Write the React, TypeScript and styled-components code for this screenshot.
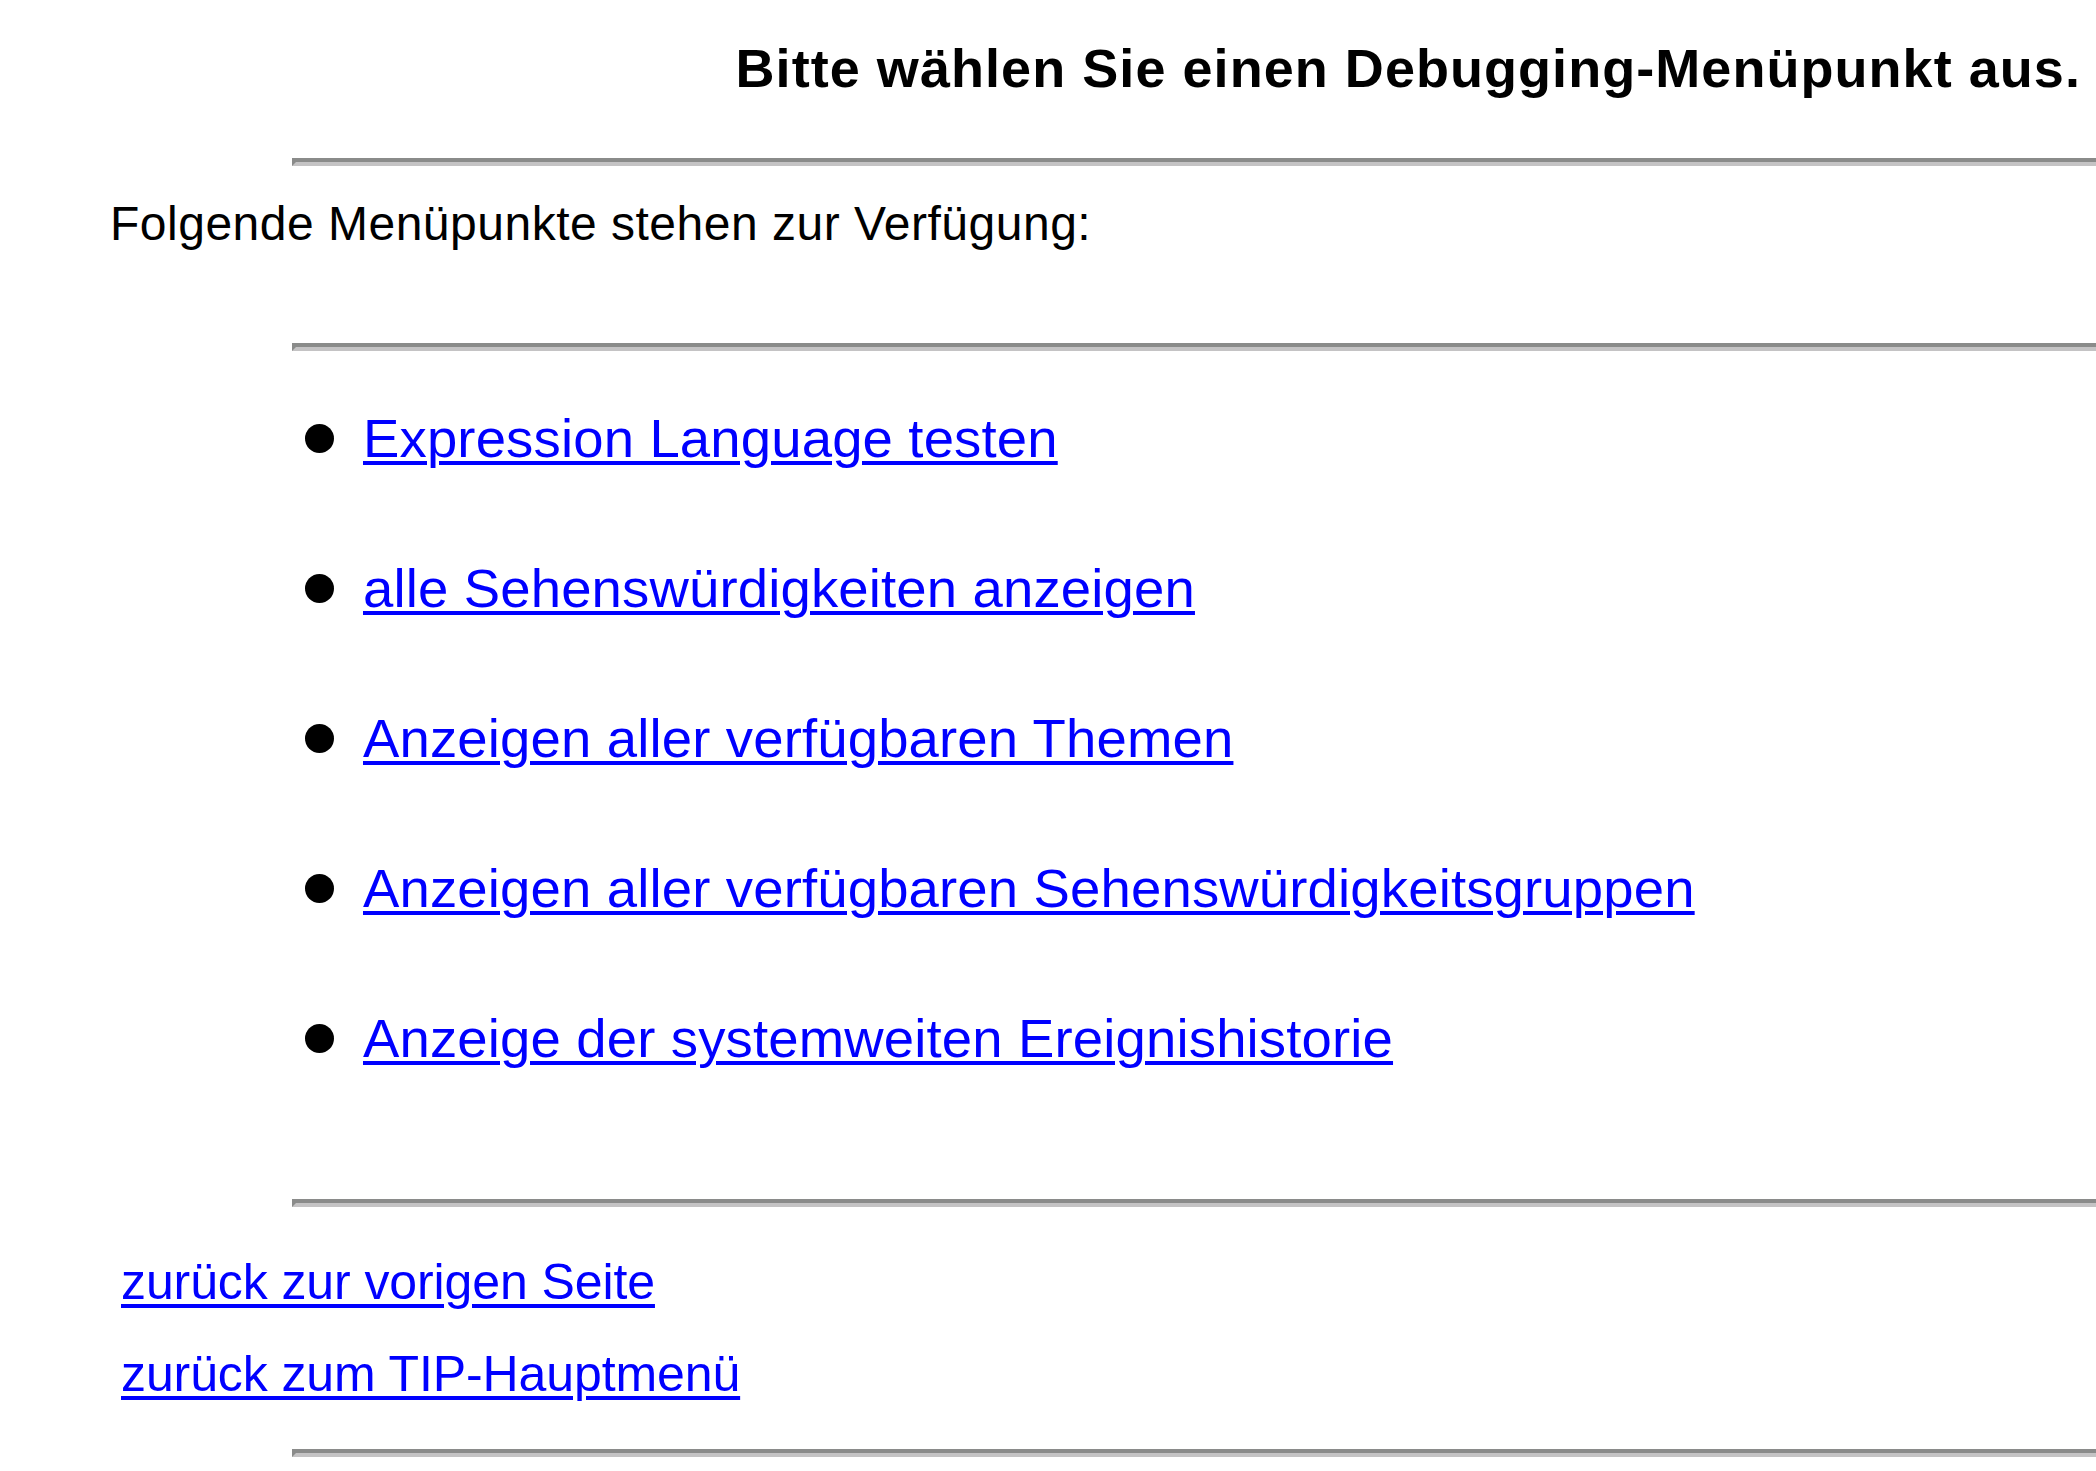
import React from "react";
import styled, { createGlobalStyle } from "styled-components";

const GlobalStyle = createGlobalStyle`
  html, body {
    margin: 0;
    padding: 0;
    background: #ffffff;
  }
  body {
    font-family: "Liberation Sans", Arial, Helvetica, sans-serif;
    color: #000000;
  }
`;

const Page = styled.div`
  display: flex;
  flex-direction: column;
  padding-top: 37px;
`;

const Heading = styled.h1`
  margin: 0;
  padding-right: 15px;
  font-size: 54px;
  line-height: 62px;
  font-weight: 700;
  letter-spacing: 1.05px;
  text-align: right;
  white-space: nowrap;
`;

const Rule = styled.hr<{ $top: number }>`
  margin: ${(p) => p.$top}px 0 0 292px;
  height: 0;
  border-style: solid;
  border-width: 4px 0 4px 4px;
  border-color: #8a8b8a transparent #c4c3c4 #8a8b8a;
`;

const Intro = styled.p`
  margin: 30px 0 0 0;
  padding-left: 110px;
  font-size: 48px;
  line-height: 56px;
  letter-spacing: 0.5px;
  white-space: nowrap;
`;

const MenuList = styled.ul`
  list-style: none;
  margin: 58px 0 0 0;
  padding: 0 0 0 305px;
  display: flex;
  flex-direction: column;
  gap: 90px;
`;

const MenuItem = styled.li`
  display: flex;
  align-items: flex-start;
  gap: 29px;
  height: 60px;
`;

const Bullet = styled.span`
  flex: none;
  width: 29px;
  height: 29px;
  margin-top: 15px;
  border-radius: 50%;
  background: #000000;
`;

const MenuLink = styled.a`
  font-size: 54.5px;
  line-height: 60px;
  letter-spacing: 0.15px;
  color: #0000ff;
  text-decoration: underline;
  text-decoration-thickness: 4px;
  text-underline-offset: 4px;
  white-space: nowrap;
`;

const BackLinks = styled.div`
  margin-top: 46px;
  padding-left: 121px;
  display: flex;
  flex-direction: column;
  align-items: flex-start;
  gap: 34px;
`;

const BackLink = styled.a`
  font-size: 50px;
  line-height: 58px;
  letter-spacing: -0.1px;
  color: #0000ff;
  text-decoration: underline;
  text-decoration-thickness: 4px;
  text-underline-offset: 5px;
  white-space: nowrap;
`;

const menuItems = [
  "Expression Language testen",
  "alle Sehenswürdigkeiten anzeigen",
  "Anzeigen aller verfügbaren Themen",
  "Anzeigen aller verfügbaren Sehenswürdigkeitsgruppen",
  "Anzeige der systemweiten Ereignishistorie",
];

export default function App() {
  return (
    <>
      <GlobalStyle />
      <Page>
        <Heading>Bitte wählen Sie einen Debugging-Menüpunkt aus.</Heading>
        <Rule $top={59} />
        <Intro>Folgende Menüpunkte stehen zur Verfügung:</Intro>
        <Rule $top={91} />
        <MenuList>
          {menuItems.map((label) => (
            <MenuItem key={label}>
              <Bullet />
              <MenuLink href="#">{label}</MenuLink>
            </MenuItem>
          ))}
        </MenuList>
        <Rule $top={130} />
        <BackLinks>
          <BackLink href="#">zurück zur vorigen Seite</BackLink>
          <BackLink href="#">zurück zum TIP-Hauptmenü</BackLink>
        </BackLinks>
        <Rule $top={46} />
      </Page>
    </>
  );
}
